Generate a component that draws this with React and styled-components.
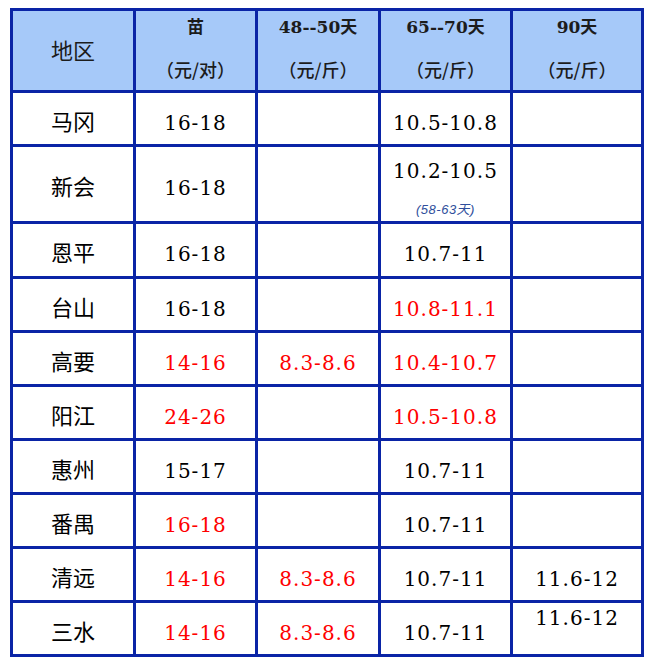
import React from "react";
import styled, { createGlobalStyle } from "styled-components";

const GlobalStyle = createGlobalStyle`
  html, body {
    margin: 0;
    padding: 0;
    background: #ffffff;
  }
`;

const LINE = "#0a24a6";

const Page = styled.div`
  padding: 8px 0 0 10px;
`;

const Grid = styled.div`
  display: grid;
  grid-template-columns: 123px 122px 123px 132px 131px;
  grid-template-rows: 82px 54px 77px 55px repeat(7, 54px);
  width: max-content;
  border-left: 3px solid ${LINE};
  border-top: 3px solid ${LINE};
`;

const Cell = styled.div`
  box-sizing: border-box;
  border-right: 3px solid ${LINE};
  border-bottom: 3px solid ${LINE};
  display: flex;
  flex-direction: column;
  align-items: center;
  justify-content: ${(p) => (p.$top ? "flex-start" : "center")};
  padding-top: ${(p) => (p.$top ? "0" : "8px")};
  color: ${(p) => (p.$red ? "#ff0000" : "#000000")};
  font-family: "DejaVu Serif", "Noto Sans CJK SC", serif;
  font-size: 20px;
  line-height: 30px;
  letter-spacing: 1px;
  white-space: nowrap;
`;

const HeadCell = styled(Cell)`
  background: #a6c9f9;
  color: #1c1c1c;
  padding: 0 0 6px 0;
  font-weight: bold;
  font-size: 17px;
  line-height: 42px;
  letter-spacing: 0;
`;

const Region = styled.span`
  font-family: "Noto Sans CJK SC", sans-serif;
  font-size: 22px;
  font-weight: 400;
  letter-spacing: 0;
  margin-top: -6px;
`;

const HeadRegion = styled(Region)`
  margin-top: 0;
  padding-top: 3px;
`;

const Unit = styled.span`
  font-family: "Noto Sans CJK SC", sans-serif;
  font-size: 18px;
  font-weight: 500;
`;

const Main = styled.span`
  line-height: 44px;
`;

const Note = styled.span`
  font-family: "Liberation Sans", "Noto Sans CJK SC", sans-serif;
  font-style: italic;
  font-size: 13px;
  line-height: 34px;
  color: #2f4f9c;
  letter-spacing: 0.5px;
`;

const headers = [
  ["苗", "（元/对）"],
  ["48--50天", "（元/斤）"],
  ["65--70天", "（元/斤）"],
  ["90天", "（元/斤）"],
];

// [text, red, note, alignTop]
const rows = [
  ["马冈", ["16-18"], null, ["10.5-10.8"], null],
  ["新会", ["16-18"], null, ["10.2-10.5", false, "(58-63天)"], null],
  ["恩平", ["16-18"], null, ["10.7-11"], null],
  ["台山", ["16-18"], null, ["10.8-11.1", true], null],
  ["高要", ["14-16", true], ["8.3-8.6", true], ["10.4-10.7", true], null],
  ["阳江", ["24-26", true], null, ["10.5-10.8", true], null],
  ["惠州", ["15-17"], null, ["10.7-11"], null],
  ["番禺", ["16-18", true], null, ["10.7-11"], null],
  ["清远", ["14-16", true], ["8.3-8.6", true], ["10.7-11"], ["11.6-12"]],
  ["三水", ["14-16", true], ["8.3-8.6", true], ["10.7-11"], ["11.6-12", false, null, true]],
];

function App() {
  return (
    <Page>
      <GlobalStyle />
      <Grid>
        <HeadCell>
          <HeadRegion>地区</HeadRegion>
        </HeadCell>
        {headers.map(([top, unit], i) => (
          <HeadCell key={i}>
            <span>{top}</span>
            <Unit>{unit}</Unit>
          </HeadCell>
        ))}
        {rows.map(([region, ...vals], ri) => (
          <React.Fragment key={ri}>
            <Cell>
              <Region>{region}</Region>
            </Cell>
            {vals.map((v, ci) =>
              v ? (
                <Cell key={ci} $red={v[1]} $top={v[3]}>
                  {v[2] ? (
                    <>
                      <Main>{v[0]}</Main>
                      <Note>{v[2]}</Note>
                    </>
                  ) : (
                    <span>{v[0]}</span>
                  )}
                </Cell>
              ) : (
                <Cell key={ci} />
              )
            )}
          </React.Fragment>
        ))}
      </Grid>
    </Page>
  );
}

export default App;
